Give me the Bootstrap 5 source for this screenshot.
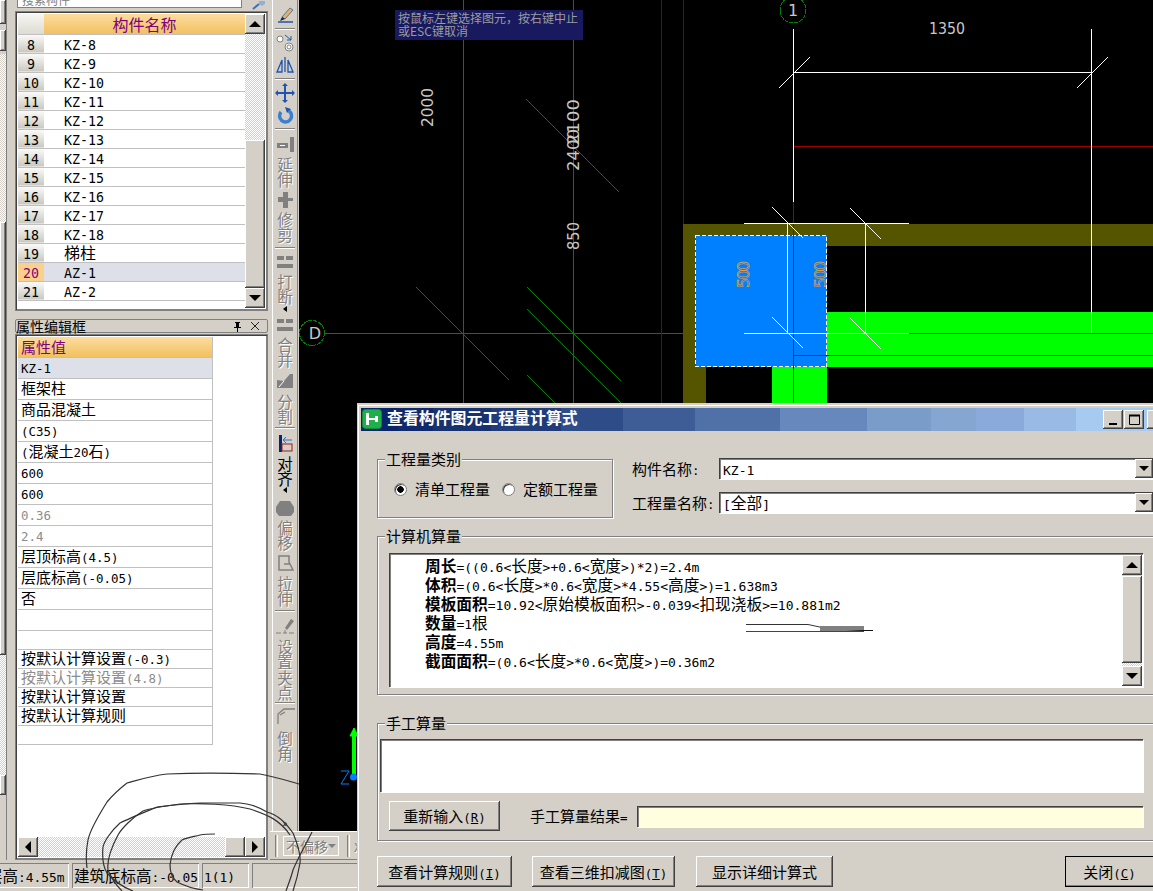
<!DOCTYPE html>
<html lang="zh-CN">
<head>
<meta charset="UTF-8">
<title>查看构件图元工程量计算式</title>
<link href="https://cdn.jsdelivr.net/npm/bootstrap@5.3.0/dist/css/bootstrap.min.css" rel="stylesheet">
<style>
html, body { height: 100%; overflow: hidden; }
body { background: #d4d0c8; color: #000; font: 400 15px/1.2 "Noto Sans CJK SC", sans-serif; }
.latin { font-family: "DejaVu Sans Mono", "Liberation Mono", monospace; font-size: .83em; line-height: 0; }
.app-shell { position: relative; width: 1153px; height: 891px; overflow: hidden; }
.raised { background: #d4d0c8; box-shadow: inset -1px -1px #404040, inset 1px 1px #fff, inset -2px -2px #808080; }
.sunken { background: #fff; box-shadow: inset 1px 1px #404040, inset 2px 2px #808080, 1px 1px #fff; }
.hatch { background: repeating-conic-gradient(#fff 0 25%, #d4d0c8 0 50%) 0 0 / 2px 2px; }
.arrow-up, .arrow-down, .arrow-left, .arrow-right { display: flex; align-items: center; justify-content: center; flex: none; }
.arrow-up::after { content: ""; border: 6px solid transparent; border-top: 0; border-bottom: 6px solid #000; }
.arrow-down::after { content: ""; border: 6px solid transparent; border-bottom: 0; border-top: 6px solid #000; }
.arrow-left::after { content: ""; border: 6px solid transparent; border-left: 0; border-right: 6px solid #000; }
.arrow-right::after { content: ""; border: 6px solid transparent; border-right: 0; border-left: 6px solid #000; }

.main-area { height: 860px; }
.left-rail { width: 15px; flex: none; }
.rail-strip { width: 7px; height: 100%; border-right: 1px solid #808080; }
.rail-btn { height: 24px; }
.side-panel { width: 255px; flex: none; }
.search-row { height: 11px; padding-left: 2px; }
.search-box { width: 225px; height: 8px; background: #fff; border: 1px solid #808080; border-top: 0; font-size: 12px; line-height: 0; color: #808080; overflow: hidden; }
.search-box span { display: block; margin: 0 0 0 4px; }
.frame-box { border: 1px solid #808080; box-shadow: inset 1px 1px #404040, inset -1px -1px #808080; padding: 2px; background: #fff; }
.list-frame { height: 300px; width: 253px; }
.prop-title { height: 14px; margin-top: 8px; width: 253px; border: 1px solid #808080; border-radius: 2px; padding: 0 7px 0 0; font-size: 14px; line-height: 13px; }
.prop-frame { height: 526px; width: 253px; margin-top: 1px; }
.grid-table.table { table-layout: fixed; margin: 0; border-collapse: collapse; }
.grid-table.table > :not(caption) > * > * { padding: 0; background: #fff; color: #000; box-shadow: none; border-width: 0 0 1px; border-color: #c0c0c0; white-space: nowrap; overflow: hidden; vertical-align: middle; line-height: 16px; }
.grid-table.table > thead > tr > th { height: 20px; font-weight: 400; color: #800080; background: linear-gradient(#fcdc9f, #f2c15f); border-bottom: 1px solid #c0c0c0; }
.list-table { width: 228px; font-size: 16px; }
.list-table.table > thead > tr > th.blank-head { background: linear-gradient(#f6f6f2, #dddbd2); }
.list-table.table > tbody > tr > td { height: 19px; padding-bottom: 1px; }
.list-table.table > tbody > tr > td.row-num { text-align: center; background: linear-gradient(#fbfbf9, #c9c7bf); }
.list-table.table > tbody > tr > td.row-name { padding-left: 20px; }
.list-table.table > tbody > tr.picked > td.row-num { background: #fbd08a; color: #800080; }
.list-table.table > tbody > tr.picked > td.row-name { background: #dde0e8; }
.list-scroll { width: 20px; }
.scroll-btn { width: 20px; height: 20px; }
.list-scroll .hatch-a { height: 107px; }
.list-scroll .thumb-a { height: 149px; }
.prop-table { width: 195px; border-right: 1px solid #c0c0c0; }
.prop-table.table > :not(caption) > * > * { padding-left: 3px; border-right: 1px solid #c0c0c0; }
.prop-table.table > tbody > tr > td { height: 21px; padding-bottom: 1px; }
.prop-table.table > tbody > tr.short-row > td { height: 19px; }
.prop-table.table > tbody > tr.picked > td { background: #dde0e8; }
.prop-table.table > tbody > tr.muted-row > td { color: #8c8c8c; }
.prop-scroll { height: 20px; margin: 0 0 0 0; }

.tool-col { width: 26px; flex: none; margin: 0 1px 0 2px; height: 831px; border-left: 1px solid #fff; border-right: 1px solid #808080; padding-top: 4px; }
.tool-sep { height: 2px; margin-left: 2px; margin-right: 2px; border-top: 1px solid #808080; border-bottom: 1px solid #fff; flex: none; }
.tool-icon { height: 22px; flex: none; }
.tool-icon svg { display: block; margin: 0 auto; }
.tool-text { writing-mode: vertical-rl; text-orientation: upright; font-size: 15.5px; line-height: 24px; letter-spacing: 0; flex: none; color: #808080; text-shadow: 1px 1px 0 #fff; }
.tool-text.on { color: #000; text-shadow: none; }
.tool-flag { height: 6px; flex: none; }
.tool-flag::after { content: ""; display: block; margin: 0 auto; width: 0; border: 3px solid transparent; border-left: 0; border-right: 4px solid #000; }
.tool-more { font-size: 10px; line-height: 10px; margin-top: auto; margin-bottom: 3px; }
.cad-view { display: block; flex: none; background: #000; }
.bottom-strip { width: 881px; height: 29px; padding-left: 5px; border-top: 1px solid #fff; border-bottom: 1px solid #808080; }
.grip { width: 3px; height: 22px; border-left: 1px solid #808080; border-right: 1px solid #fff; flex: none; }
.offset-box { width: 56px; height: 20px; margin-left: 5px; border: 1px solid #fff; color: #808080; text-shadow: 1px 1px 0 #fff; padding-left: 2px; font-size: 14px; line-height: 18px; white-space: nowrap; overflow: hidden; flex: none; }
.offset-caret { border: 4px solid transparent; border-bottom: 0; border-top: 4px solid #808080; margin: 0 3px 0 auto; flex: none; }
.status-bar { height: 28px; padding: 3px 0 0; margin-left: -15px; font-size: 15.5px; line-height: 22px; }
.status-cell { height: 25px; padding: 1px 2px 0; margin-right: 3px; box-shadow: inset 1px 1px #808080, inset -1px -1px #fff; overflow: hidden; white-space: nowrap; flex: none; }
.scribble { position: absolute; left: 0; top: 0; pointer-events: none; }

.calc-dialog { position: absolute; left: 358px; top: 404px; width: 810px; height: 487px; background: #d4d0c8; border-top: 1px solid #d4d0c8; box-shadow: inset 1px 1px #fff, -1px -1px #d4d0c8; font-size: 15.7px; }
.dlg-title { height: 23px; margin: 3px 0 0 3px; padding-right: 1px; color: #fff; font-weight: 700; font-size: 15.9px; background: linear-gradient(90deg, #0a246a 0 37px, #10296c 37px 72px, #183270 72px 130px, #223c7a 130px 200px, #2e4c88 200px 262px, #3e5c96 262px 334px, #5070a8 334px 419px, #6688bc 419px 506px, #7a9cc9 506px 570px, #86a6d2 570px 615px, #8aaadc 615px 663px, #98bae4 663px 715px, #a6caf0 715px); }
.dlg-logo { width: 20px; height: 20px; margin: 1px 5px 0 1px; flex: none; }
.caption-btn { width: 20px; height: 19px; margin-top: 2px; margin-left: 1px; flex: none; }
.dlg-body { padding-left: 19px; }
.group-box { position: relative; border: 1px solid #808080; box-shadow: 1px 1px #fff, inset 1px 1px #fff; }
.group-name { position: absolute; left: 7px; top: -11px; background: #d4d0c8; padding: 0 1px; line-height: 20px; font-size: 15px; }
.kind-box { width: 236px; height: 59px; margin-top: 28px; padding: 20px 0 0 16px; flex: none; font-size: 15px; }
.form-check-input.win-radio { width: 13px; height: 13px; margin: 0 8px 0 0; float: none; border: 1px solid #808080; background: #fff; box-shadow: inset 1px 1px #404040; }
.form-check-input.win-radio:checked { background: radial-gradient(circle, #000 0 3px, #fff 3.5px); }
.combo-label { width: 87px; flex: none; font-size: 15px; }
.combo-box { width: 434px; height: 21px; padding: 2px 0 0 4px; line-height: 18px; position: relative; }
.combo-btn { position: absolute; right: 0; top: 1px; width: 18px; height: 19px; }
.combo-btn::after { border-width: 5px; border-bottom: 0; border-top-width: 5px; }
.calc-box { width: 790px; height: 159px; margin-top: 18px; padding: 16px 0 0 11px; }
.calc-text { width: 754px; height: 134px; padding: 3px 0 0 36px; line-height: 19px; position: relative; }
.calc-text b { font-weight: 700; }
.calc-scroll { position: absolute; right: 1px; top: 2px; width: 20px; height: 131px; background: #d4d0c8; }
.calc-thumb { height: 88px; margin-top: 1px; }
.calc-gap { height: 3px; }
.smear { position: absolute; left: 357px; top: 71px; }
.hand-box { width: 790px; height: 118px; margin-top: 28px; padding: 15px 0 0 2px; }
.hand-text { width: 763px; height: 53px; }
.hand-row { margin-top: 9px; height: 30px; padding-left: 9px; }
.win-btn.btn { border: 0; border-radius: 0; padding: 0; color: #000; font-size: 15px; line-height: 20px; flex: none; --bs-btn-font-size: 15px; }
.retry-btn { width: 111px; height: 30px; }
.result-label { margin-left: 30px; width: 107px; flex: none; white-space: nowrap; font-size: 15px; }
.result-box { width: 506px; height: 21px; background: #ffffe0; margin-top: 5px; }
.dlg-actions { margin-top: 15px; height: 31px; }
.win-btn.act-a { width: 135px; height: 31px; }
.win-btn.act-b { width: 143px; height: 31px; margin-left: 20px; }
.win-btn.act-c { width: 137px; height: 31px; margin-left: 21px; }
.win-btn.act-d { width: 110px; height: 31px; margin-left: 232px; outline: 1px solid #000; outline-offset: -1px; padding-right: 21px; }
</style>
</head>
<body>
<div class="app-shell">
  <div class="main-area d-flex">
    <div class="left-rail">
      <div class="rail-strip d-flex flex-column">
        <div class="raised rail-btn"></div>
        <div class="raised" style="height:21px;margin-top:6px"></div>
        <div class="hatch" style="height:168px;margin-top:3px"></div>
        <div class="raised flex-grow-1"></div>
        <div class="hatch" style="height:120px"></div>
        <div class="raised" style="height:20px"></div>
        <div style="height:65px"></div>
      </div>
    </div>
    <div class="side-panel">
      <div class="search-row d-flex">
        <div class="search-box"><span>搜索构件</span></div>
        <svg class="ms-2" width="18" height="10" viewBox="0 0 18 10"><path d="M3 9 L9 4" stroke="#3f6fb5" stroke-width="2"/><path d="M9 1h6v3l-3 2-3-2z" fill="#8fb0dd"/></svg>
      </div>
      <div class="frame-box list-frame d-flex justify-content-between">
        <table class="table grid-table list-table align-self-start">
          <colgroup><col style="width:26px"><col></colgroup>
          <thead><tr><th class="blank-head"></th><th class="text-center">构件名称</th></tr></thead>
          <tbody id="listBody"></tbody>
        </table>
        <div class="list-scroll d-flex flex-column">
          <div class="raised scroll-btn arrow-up"></div>
          <div class="hatch hatch-a"></div>
          <div class="raised thumb-a"></div>
          <div class="raised scroll-btn arrow-down"></div>
        </div>
      </div>
      <div class="prop-title d-flex align-items-center">
        <span>属性编辑框</span>
        <svg class="ms-auto" width="10" height="11" viewBox="0 0 10 11"><path d="M3 1h5v1h-1v4h2v1h-3v4h-1v-4h-3v-1h2v-4h-1z" fill="#000"/></svg>
        <svg class="ms-2" width="10" height="10" viewBox="0 0 10 10"><path d="M1 1 9 9M9 1 1 9" stroke="#222" stroke-width="1"/></svg>
      </div>
      <div class="frame-box prop-frame d-flex flex-column">
        <div class="flex-grow-1">
          <table class="table grid-table prop-table">
            <thead><tr><th>属性值</th></tr></thead>
            <tbody id="propBody"></tbody>
          </table>
        </div>
        <div class="prop-scroll d-flex">
          <div class="raised scroll-btn arrow-left"></div>
          <div class="hatch flex-grow-1"></div>
          <div class="raised scroll-btn"></div>
          <div class="raised scroll-btn arrow-right"></div>
        </div>
      </div>
    </div>
    <div class="d-flex flex-column">
      <div class="d-flex">
        <div class="tool-col d-flex flex-column" id="toolCol"></div>
        <svg class="cad-view" width="854" height="831" viewBox="299 0 854 831" font-family="'DejaVu Sans', sans-serif">
          <g shape-rendering="crispEdges">
            <g fill="none" stroke="#008000" stroke-width="1">
              <path d="M463.5 0V404M573.5 0V404M325 333.5H745"/>
              <path d="M526.5 99.5 619.5 192.5M416.5 287.5 509.5 380.5M527.5 287.5 621.5 381.5M527.5 309.5 621.5 403.5M527.5 375.5 555.5 403.5"/>
              <circle cx="793" cy="10" r="13" stroke-dasharray="4 1"/>
              <circle cx="312" cy="333" r="12.5" stroke-dasharray="4 1"/>
            </g>
            <path d="M661.5 0V404M683.5 0V224" stroke="#800000" stroke-width="1"/>
            <rect x="683" y="224" width="470" height="22" fill="#555500"/>
            <rect x="683" y="224" width="23" height="180" fill="#555500"/>
            <rect x="827" y="312" width="326" height="55" fill="#00ff00"/>
            <rect x="772" y="367" width="55" height="37" fill="#00ff00"/>
            <rect x="695.5" y="235.5" width="131" height="131" fill="#0080ff" stroke="#fff" stroke-dasharray="4 2"/>
            <path d="M793.5 146.5H1153M793.5 202V404M794 355.5H1153M909 333.5H1153" stroke="#a00000" stroke-width="1" fill="none"/>
            <g stroke="#fff" stroke-width="1" fill="none">
              <path d="M793.5 29V202M1091.5 29V333M793 72.5H1091M744 223.5H909M744 333.5H909M787.5 223V333M865.5 223V333"/>
              <path stroke-width="1.4" d="M778.5 88.5 809.5 57.5M1076.5 88.5 1107.5 57.5M772.5 207.5 803.5 238.5M850.5 208.5 881.5 239.5M772.5 317.5 803.5 348.5M850.5 318.5 881.5 349.5"/>
            </g>
          </g>
          <g fill="#c8c8c8" font-size="16">
            <text x="947" y="34" text-anchor="middle" textLength="36" lengthAdjust="spacingAndGlyphs">1350</text>
            <text transform="translate(433 127) rotate(-90)" textLength="39" lengthAdjust="spacingAndGlyphs">2000</text>
            <text transform="translate(579 145) rotate(-90)" textLength="46" lengthAdjust="spacingAndGlyphs">2100</text>
            <text transform="translate(579 171) rotate(-90)" textLength="42" lengthAdjust="spacingAndGlyphs">2400</text>
            <text transform="translate(579 250) rotate(-90)" textLength="28" lengthAdjust="spacingAndGlyphs">850</text>
            <text x="793" y="16" text-anchor="middle">1</text>
            <text x="315" y="339" text-anchor="middle">D</text>
          </g>
          <g fill="none" stroke="#f0a030" stroke-width=".6" font-size="16">
            <text transform="translate(749 288) rotate(-90)" textLength="27">500</text>
            <text transform="translate(826 288) rotate(-90)" textLength="27">500</text>
          </g>
          <rect x="395" y="10" width="188" height="30" fill="#191960"/>
          <g fill="#9c9c9c" font-size="12" font-family="'Noto Sans CJK SC', sans-serif">
            <text x="398" y="23" textLength="180">按鼠标左键选择图元，按右键中止</text>
            <text x="398" y="36">或ESC键取消</text>
          </g>
          <path d="M354 775V735" stroke="#00ff00" stroke-width="4"/>
          <path d="M354 728l-4 8h8z" fill="#00ff00" stroke="#00ff00"/>
          <circle cx="353.5" cy="777" r="3.5" fill="#0080ff"/>
          <path d="M341 771h8l-8 13h8" fill="none" stroke="#0080ff"/>
        </svg>
      </div>
      <div class="bottom-strip d-flex align-items-center">
        <div class="grip"></div>
        <div class="offset-box d-flex align-items-center"><span>不偏移</span><span class="offset-caret"></span></div>
        <div class="grip ms-2"></div>
        <span class="ms-1" style="color:#808080;text-shadow:1px 1px 0 #fff">X=</span>
      </div>
    </div>
  </div>
  <div class="status-bar d-flex">
    <div class="status-cell" style="width:84px">层高:4.55m</div>
    <div class="status-cell" style="width:127px">建筑底标高:-0.05:</div>
    <div class="status-cell" style="width:47px">1(1)</div>
    <div class="status-cell" style="width:110px"></div>
  </div>

  <svg class="scribble" width="360" height="891" viewBox="0 0 360 891" fill="none" stroke="#333" stroke-width="1.2">
    <path d="M299 784 C285 780 272 776 260 774 C230 773 190 773 167 774 C150 776 138 780 127 783 C118 790 112 796 107 802 C97 818 90 830 88 840 C86 850 86 860 87 868"/>
    <path d="M293 833 C285 822 278 815 267 812 C255 805 248 804 240 803 C225 803 210 803 200 803 C180 804 165 806 157 807 C145 812 130 818 120 823 C110 832 104 842 103 847 C102 858 104 868 107 873 C115 882 125 888 133 891"/>
    <path d="M290 835 C280 820 268 815 250 809 C230 804 200 803 180 804 C165 806 150 808 143 811 C132 818 122 828 118 835 C110 850 107 862 108 870 C112 880 118 887 122 891"/>
    <path d="M215 834 C210 834 205 834 200 835 C192 837 186 838 182 840 C175 846 171 855 170 865 C170 872 172 878 177 882 C185 886 195 889 203 890"/>
    <path d="M293 833 C298 845 301 855 300 863 C298 875 295 885 293 891"/>
    <path d="M312 832 C305 846 298 858 293 870 C291 878 288 885 286 891"/>
  </svg>

  <div class="calc-dialog">
    <div class="dlg-title d-flex">
      <svg class="dlg-logo" viewBox="0 0 20 20"><rect x=".5" y=".5" width="19" height="19" rx="3" fill="#1fb04c" stroke="#0f8a36"/><path d="M4 4h3v5h6v-2h3v6h-3v-2h-6v5h-3z" fill="#fff"/></svg>
      <span>查看构件图元工程量计算式</span>
      <div class="raised caption-btn ms-auto d-flex justify-content-center align-items-end pb-1"><svg width="8" height="2"><rect width="8" height="2"/></svg></div>
      <div class="raised caption-btn d-flex justify-content-center align-items-center"><svg width="11" height="11" fill="none" stroke="#000"><path d="M.5 1.5h10v9h-10z"/><path d="M0 1.5h11" stroke-width="2"/></svg></div>
      <div class="raised caption-btn" style="margin-left:3px"></div>
    </div>
    <div class="dlg-body">
      <div class="d-flex">
        <div class="group-box kind-box">
          <span class="group-name">工程量类别</span>
          <div class="d-flex align-items-center">
            <input class="form-check-input win-radio" type="radio" name="kind" checked>
            <span style="width:87px">清单工程量</span>
            <input class="form-check-input win-radio" type="radio" name="kind">
            <span>定额工程量</span>
          </div>
        </div>
        <div style="margin:27px 0 0 19px">
          <div class="d-flex align-items-center" style="height:21px"><span class="combo-label">构件名称:</span><div class="sunken combo-box">KZ-1<div class="raised combo-btn arrow-down"></div></div></div>
          <div class="d-flex align-items-center" style="height:21px;margin-top:13px"><span class="combo-label">工程量名称:</span><div class="sunken combo-box">[全部]<div class="raised combo-btn arrow-down"></div></div></div>
        </div>
      </div>
      <div class="group-box calc-box">
        <span class="group-name">计算机算量</span>
        <div class="sunken calc-text">
          <div><b>周长</b>=((0.6&lt;长度&gt;+0.6&lt;宽度&gt;)*2)=2.4m</div>
          <div><b>体积</b>=(0.6&lt;长度&gt;*0.6&lt;宽度&gt;*4.55&lt;高度&gt;)=1.638m3</div>
          <div><b>模板面积</b>=10.92&lt;原始模板面积&gt;-0.039&lt;扣现浇板&gt;=10.881m2</div>
          <div><b>数量</b>=1根</div>
          <div><b>高度</b>=4.55m</div>
          <div><b>截面面积</b>=(0.6&lt;长度&gt;*0.6&lt;宽度&gt;)=0.36m2</div>
          <svg class="smear" width="128" height="10" viewBox="0 0 128 10"><path d="M0 1h62l14 3H118V7H0z" fill="#fff"/><path d="M0 .5H62L76 3.5" stroke="#333" fill="none"/><rect x="74" y="2" width="44" height="5" fill="#808080"/><path d="M0 7.5H118" stroke="#444"/><path d="M100 7h27v-1h-9z" fill="#111"/></svg>
          <div class="calc-scroll d-flex flex-column">
            <div class="raised scroll-btn arrow-up"></div>
            <div class="raised calc-thumb"></div>
            <div class="hatch calc-gap"></div>
            <div class="raised scroll-btn arrow-down"></div>
          </div>
        </div>
      </div>
      <div class="group-box hand-box">
        <span class="group-name">手工算量</span>
        <div class="sunken hand-text"></div>
        <div class="hand-row d-flex align-items-start">
          <button class="btn win-btn raised retry-btn" type="button">重新输入(<u>R</u>)</button>
          <span class="result-label" style="line-height:30px">手工算量结果=</span>
          <div class="sunken result-box"></div>
        </div>
      </div>
      <div class="dlg-actions d-flex">
        <button class="btn win-btn raised act-a" type="button">查看计算规则(<u>I</u>)</button>
        <button class="btn win-btn raised act-b" type="button">查看三维扣减图(<u>T</u>)</button>
        <button class="btn win-btn raised act-c" type="button">显示详细计算式</button>
        <button class="btn win-btn raised act-d" type="button">关闭(<u>C</u>)</button>
      </div>
    </div>
  </div>
</div>

<script>
  // component list rows
  const names = [];
  for (let i = 8; i <= 18; i++) names.push({ no: i, name: 'KZ-' + i });
  names.push({ no: 19, name: '梯柱' }, { no: 20, name: 'AZ-1', picked: true }, { no: 21, name: 'AZ-2' });
  document.getElementById('listBody').innerHTML = names.map(r =>
    `<tr class="${r.picked ? 'picked' : ''}"><td class="row-num">${r.no}</td><td class="row-name">${r.name}</td></tr>`).join('');

  // property values, last rows are the shorter ones
  const props = [
    ['KZ-1', 'picked'], ['框架柱'], ['商品混凝土'], ['(C35)'], ['(混凝土20石)'], ['600'], ['600'],
    ['0.36', 'muted-row'], ['2.4', 'muted-row'], ['层顶标高(4.5)'], ['层底标高(-0.05)'], ['否'], [''],
    ['', 'short-row'], ['按默认计算设置(-0.3)', 'short-row'], ['按默认计算设置(4.8)', 'short-row muted-row'],
    ['按默认计算设置', 'short-row'], ['按默认计算规则', 'short-row'], ['', 'short-row']
  ];
  document.getElementById('propBody').innerHTML = props.map(p =>
    `<tr class="${p[1] || ''}"><td>${p[0]}</td></tr>`).join('');

  // vertical toolbar, m is the gap above each item
  const G = '#808080', B = '#1f55b0';
  const icons = {
    brush: `<path d="M4 18h15" stroke="${B}" stroke-width="1.5"/><path d="M8 13 16 4l3 2-8 9z" fill="#e6b060" stroke="${B}" stroke-width=".7"/><path d="M6 17l2-4 3 2z" fill="#222"/>`,
    swap: `<circle cx="6" cy="7" r="3" fill="#fff" stroke="${G}"/><circle cx="15" cy="15" r="4" fill="#fff" stroke="${G}"/><circle cx="15" cy="15" r="2" fill="none" stroke="${G}"/><path d="M11 3l6 5M17 4v4h-4" stroke="${B}" fill="none"/>`,
    mirror: `<path d="M11 3v15M3 18 8 6v12zM19 18 14 6v12z" fill="none" stroke="${B}" stroke-width="1.3"/>`,
    move: `<path d="M10 4h-2l3-3 3 3h-2v6h6v-2l3 3-3 3v-2h-6v6h2l-3 3-3-3h2v-6h-6v2l-3-3 3-3v2h6z" fill="${B}"/>`,
    turn: `<path d="M7 8a6 6 0 1 0 8-1" fill="none" stroke="#3b7fd0" stroke-width="3.5"/><path d="M11 3l6 2-4 4z" fill="${B}"/>`,
    extend: `<rect x="3" y="9" width="11" height="5" fill="${G}"/><rect x="6" y="11" width="5" height="1" fill="#fff"/><rect x="16" y="3" width="4" height="15" fill="${G}"/>`,
    trim: `<path d="M9 3h5v6h5v3h-5v7h-5v-6h-5v-5h5z" fill="${G}"/>`,
    cut: `<rect x="3" y="5" width="7" height="4" fill="${G}"/><rect x="12" y="5" width="7" height="4" fill="${G}"/><rect x="3" y="13" width="16" height="4" fill="${G}"/>`,
    split: `<path d="M3 17V9l7 1 6-7h3v14z" fill="${G}"/><path d="M5 16l5-6" stroke="#fff"/>`,
    align: `<rect x="5" y="2" width="3" height="17" fill="#0a246a"/><rect x="8" y="11" width="10" height="7" fill="none" stroke="#a01818"/><path d="M9 7h9M9 7l3-3M9 7l3 3" stroke="#2f6fd0" fill="none"/>`,
    offset: `<path d="M6 4h10l4 6v5l-3 4H5l-3-4v-5z" fill="${G}"/>`,
    stretch: `<path d="M5 3h10v6l4 8H5zM10 11h6" fill="none" stroke="${G}" stroke-width="1.5"/>`,
    grip: `<path d="M11 12 17 3l3 2-7 9z" fill="${G}"/><path d="M2 17h5M9 17h4M15 17h5M11 14v3" stroke="${G}"/>`,
    chamfer: `<path d="M4 18V8l6-5h11M6 9l5-3" fill="none" stroke="${G}" stroke-width="1.3"/>`
  };
  const tools = [
    { i: 'brush', m: 0 }, { s: 1, m: 2 }, { i: 'swap', m: 2 }, { i: 'mirror', m: 0 }, { s: 1, m: 2 },
    { i: 'move', m: 2 }, { i: 'turn', m: 0 }, { s: 1, m: 2 },
    { i: 'extend', m: 4 }, { t: '延伸', m: 1 }, { i: 'trim', m: 1 }, { t: '修剪', m: 1 }, { s: 1, m: 4 },
    { i: 'cut', m: 2 }, { t: '打断', m: 1 }, { f: 1, m: 1 }, { i: 'cut', m: 2 }, { t: '合并', m: 1 },
    { i: 'split', m: 3 }, { t: '分割', m: 1 }, { s: 1, m: 2 },
    { i: 'align', m: 4 }, { t: '对齐', m: 1, on: 1 }, { f: 1, m: 0 }, { i: 'offset', m: 4 }, { t: '偏移', m: 1 },
    { i: 'stretch', m: 2 }, { t: '拉伸', m: 1 }, { s: 1, m: 3 },
    { i: 'grip', m: 4 }, { t: '设置夹点', m: 1 }, { s: 1, m: 1 },
    { i: 'chamfer', m: 2 }, { t: '倒角', m: 3 }
  ];
  const toolCol = document.getElementById('toolCol');
  toolCol.innerHTML = tools.map(x => {
    const gap = `style="margin-top:${x.m}px"`;
    if (x.s) return `<div class="tool-sep" ${gap}></div>`;
    if (x.f) return `<div class="tool-flag" ${gap}></div>`;
    if (x.t) return `<div class="tool-text align-self-center ${x.on ? 'on' : ''}" ${gap}>${x.t}</div>`;
    return `<div class="tool-icon" ${gap}><svg width="22" height="22" viewBox="0 0 22 22">${icons[x.i]}</svg></div>`;
  }).join('') + '<div class="tool-more text-center">&raquo;</div>';

  // half width latin like the bitmap font: smaller mono size than the CJK around it
  const walker = document.createTreeWalker(document.body, NodeFilter.SHOW_TEXT);
  const found = [];
  while (walker.nextNode()) {
    const n = walker.currentNode;
    if (n.parentElement.closest('script, svg')) continue;
    if (/[\x21-\x7e]/.test(n.nodeValue)) found.push(n);
  }
  found.forEach(n => {
    const box = document.createElement('span');
    n.nodeValue.split(/([\x21-\x7e]+)/).forEach((part, i) => {
      if (i % 2) {
        const s = document.createElement('span');
        s.className = 'latin';
        s.textContent = part;
        box.appendChild(s);
      } else if (part) box.appendChild(document.createTextNode(part));
    });
    n.replaceWith(...box.childNodes);
  });
</script>
<script src="https://cdn.jsdelivr.net/npm/bootstrap@5.3.0/dist/js/bootstrap.bundle.min.js"></script>
</body>
</html>
